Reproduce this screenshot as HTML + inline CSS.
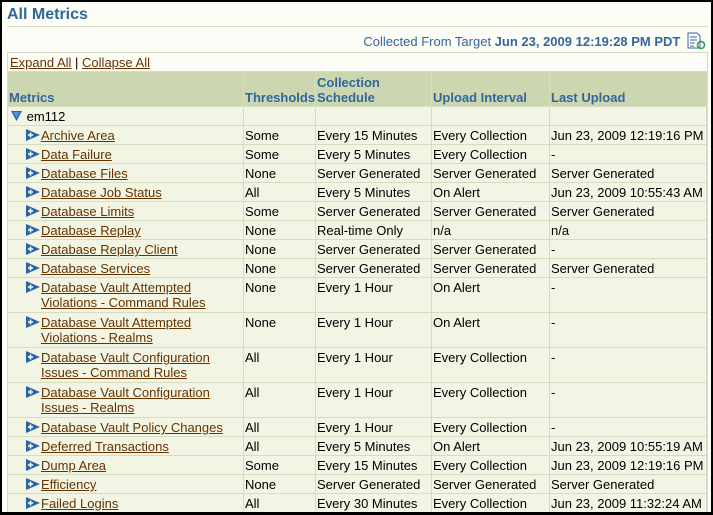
<!DOCTYPE html>
<html><head><style>
*{margin:0;padding:0;box-sizing:border-box}
html,body{width:713px;height:515px;overflow:hidden}
body{background:#000;font-family:"Liberation Sans",sans-serif;font-size:13px;color:#000}
#pg{position:absolute;left:2px;top:2px;width:709px;height:510px;background:#fcfdf7;overflow:hidden}
h1{position:absolute;left:5px;top:4px;font-size:16px;font-weight:bold;color:#336699}
.hr{position:absolute;left:5px;top:24px;width:701px;height:1px;background:#d6dcbf}
.col{position:absolute;right:5px;top:30px;font-size:13px;color:#336699;white-space:nowrap}
.col b{font-weight:bold}
.box{position:absolute;left:5px;top:50px;width:701px;height:470px;border:1px solid #d6dcbf;border-bottom:none}
.links{position:absolute;left:8px;top:53px;font-size:13px}
a{color:#663300;text-decoration:underline}
table{position:absolute;left:5px;top:69px;border-collapse:collapse;table-layout:fixed;width:699px}
td,th{border:1px solid #d6dcbf;padding:0 1px;vertical-align:top;text-align:left;white-space:nowrap;line-height:15px;overflow:hidden}
th{background:#ccd6b0;color:#336699;font-weight:bold;vertical-align:bottom;padding-bottom:1px}
td{background:#f2f4e4;height:19px;padding-top:2px}
tr.d td{height:35px}
.ic{display:inline-block;width:16px;height:12px;vertical-align:-1px}
.m{padding-left:17px}
.c2{padding-left:16px}
</style></head><body><div id="pg">
<h1>All Metrics</h1>
<div class="hr"></div>
<div class="col">Collected From Target <b>Jun 23, 2009 12:19:28 PM PDT</b> <svg width="20" height="18" style="vertical-align:-4px;margin-left:2px" viewBox="0 0 20 18"><path d="M2 1h9l3 3v12H2z" fill="#fff" stroke="#336699"/><path d="M4 5h7M4 8h7M4 11h5M4 14h4" stroke="#336699"/><circle cx="15" cy="13" r="3.5" fill="none" stroke="#2a9a4a" stroke-width="1.5"/></svg></div>
<div class="box"></div>
<div class="links"><a>Expand All</a> | <a>Collapse All</a></div>
<table>
<colgroup><col style="width:236px"><col style="width:72px"><col style="width:116px"><col style="width:118px"><col style="width:157px"></colgroup>
<tr style="height:35px"><th>Metrics</th><th>Thresholds</th><th>Collection<br>Schedule</th><th>Upload Interval</th><th>Last Upload</th></tr>
<tr><td><svg width="12" height="12" style="vertical-align:-1px;margin-left:2px" viewBox="0 0 12 12"><path d="M0 1h11L5.5 11z" fill="#2a64a8"/><path d="M2 2h7L5.5 8z" fill="#5a90d0"/></svg> em112</td><td></td><td></td><td></td><td></td></tr>
<tr><td class="m"><svg class="ic" viewBox="0 0 16 12"><path d="M1 0l14 6L1 12z" fill="#2a64a8"/><path d="M3 6h5M5.5 3.5v5" stroke="#fff" stroke-width="1.5"/></svg><a>Archive Area</a></td><td>Some</td><td>Every 15 Minutes</td><td>Every Collection</td><td>Jun 23, 2009 12:19:16 PM</td></tr>
<tr><td class="m"><svg class="ic" viewBox="0 0 16 12"><path d="M1 0l14 6L1 12z" fill="#2a64a8"/><path d="M3 6h5M5.5 3.5v5" stroke="#fff" stroke-width="1.5"/></svg><a>Data Failure</a></td><td>Some</td><td>Every 5 Minutes</td><td>Every Collection</td><td>-</td></tr>
<tr><td class="m"><svg class="ic" viewBox="0 0 16 12"><path d="M1 0l14 6L1 12z" fill="#2a64a8"/><path d="M3 6h5M5.5 3.5v5" stroke="#fff" stroke-width="1.5"/></svg><a>Database Files</a></td><td>None</td><td>Server Generated</td><td>Server Generated</td><td>Server Generated</td></tr>
<tr><td class="m"><svg class="ic" viewBox="0 0 16 12"><path d="M1 0l14 6L1 12z" fill="#2a64a8"/><path d="M3 6h5M5.5 3.5v5" stroke="#fff" stroke-width="1.5"/></svg><a>Database Job Status</a></td><td>All</td><td>Every 5 Minutes</td><td>On Alert</td><td>Jun 23, 2009 10:55:43 AM</td></tr>
<tr><td class="m"><svg class="ic" viewBox="0 0 16 12"><path d="M1 0l14 6L1 12z" fill="#2a64a8"/><path d="M3 6h5M5.5 3.5v5" stroke="#fff" stroke-width="1.5"/></svg><a>Database Limits</a></td><td>Some</td><td>Server Generated</td><td>Server Generated</td><td>Server Generated</td></tr>
<tr><td class="m"><svg class="ic" viewBox="0 0 16 12"><path d="M1 0l14 6L1 12z" fill="#2a64a8"/><path d="M3 6h5M5.5 3.5v5" stroke="#fff" stroke-width="1.5"/></svg><a>Database Replay</a></td><td>None</td><td>Real-time Only</td><td>n/a</td><td>n/a</td></tr>
<tr><td class="m"><svg class="ic" viewBox="0 0 16 12"><path d="M1 0l14 6L1 12z" fill="#2a64a8"/><path d="M3 6h5M5.5 3.5v5" stroke="#fff" stroke-width="1.5"/></svg><a>Database Replay Client</a></td><td>None</td><td>Server Generated</td><td>Server Generated</td><td>-</td></tr>
<tr><td class="m"><svg class="ic" viewBox="0 0 16 12"><path d="M1 0l14 6L1 12z" fill="#2a64a8"/><path d="M3 6h5M5.5 3.5v5" stroke="#fff" stroke-width="1.5"/></svg><a>Database Services</a></td><td>None</td><td>Server Generated</td><td>Server Generated</td><td>Server Generated</td></tr>
<tr class="d"><td class="m"><svg class="ic" viewBox="0 0 16 12"><path d="M1 0l14 6L1 12z" fill="#2a64a8"/><path d="M3 6h5M5.5 3.5v5" stroke="#fff" stroke-width="1.5"/></svg><a>Database Vault Attempted</a><br><span class="c2"><a>Violations - Command Rules</a></span></td><td>None</td><td>Every 1 Hour</td><td>On Alert</td><td>-</td></tr>
<tr class="d"><td class="m"><svg class="ic" viewBox="0 0 16 12"><path d="M1 0l14 6L1 12z" fill="#2a64a8"/><path d="M3 6h5M5.5 3.5v5" stroke="#fff" stroke-width="1.5"/></svg><a>Database Vault Attempted</a><br><span class="c2"><a>Violations - Realms</a></span></td><td>None</td><td>Every 1 Hour</td><td>On Alert</td><td>-</td></tr>
<tr class="d"><td class="m"><svg class="ic" viewBox="0 0 16 12"><path d="M1 0l14 6L1 12z" fill="#2a64a8"/><path d="M3 6h5M5.5 3.5v5" stroke="#fff" stroke-width="1.5"/></svg><a>Database Vault Configuration</a><br><span class="c2"><a>Issues - Command Rules</a></span></td><td>All</td><td>Every 1 Hour</td><td>Every Collection</td><td>-</td></tr>
<tr class="d"><td class="m"><svg class="ic" viewBox="0 0 16 12"><path d="M1 0l14 6L1 12z" fill="#2a64a8"/><path d="M3 6h5M5.5 3.5v5" stroke="#fff" stroke-width="1.5"/></svg><a>Database Vault Configuration</a><br><span class="c2"><a>Issues - Realms</a></span></td><td>All</td><td>Every 1 Hour</td><td>Every Collection</td><td>-</td></tr>
<tr><td class="m"><svg class="ic" viewBox="0 0 16 12"><path d="M1 0l14 6L1 12z" fill="#2a64a8"/><path d="M3 6h5M5.5 3.5v5" stroke="#fff" stroke-width="1.5"/></svg><a>Database Vault Policy Changes</a></td><td>All</td><td>Every 1 Hour</td><td>Every Collection</td><td>-</td></tr>
<tr><td class="m"><svg class="ic" viewBox="0 0 16 12"><path d="M1 0l14 6L1 12z" fill="#2a64a8"/><path d="M3 6h5M5.5 3.5v5" stroke="#fff" stroke-width="1.5"/></svg><a>Deferred Transactions</a></td><td>All</td><td>Every 5 Minutes</td><td>On Alert</td><td>Jun 23, 2009 10:55:19 AM</td></tr>
<tr><td class="m"><svg class="ic" viewBox="0 0 16 12"><path d="M1 0l14 6L1 12z" fill="#2a64a8"/><path d="M3 6h5M5.5 3.5v5" stroke="#fff" stroke-width="1.5"/></svg><a>Dump Area</a></td><td>Some</td><td>Every 15 Minutes</td><td>Every Collection</td><td>Jun 23, 2009 12:19:16 PM</td></tr>
<tr><td class="m"><svg class="ic" viewBox="0 0 16 12"><path d="M1 0l14 6L1 12z" fill="#2a64a8"/><path d="M3 6h5M5.5 3.5v5" stroke="#fff" stroke-width="1.5"/></svg><a>Efficiency</a></td><td>None</td><td>Server Generated</td><td>Server Generated</td><td>Server Generated</td></tr>
<tr><td class="m"><svg class="ic" viewBox="0 0 16 12"><path d="M1 0l14 6L1 12z" fill="#2a64a8"/><path d="M3 6h5M5.5 3.5v5" stroke="#fff" stroke-width="1.5"/></svg><a>Failed Logins</a></td><td>All</td><td>Every 30 Minutes</td><td>Every Collection</td><td>Jun 23, 2009 11:32:24 AM</td></tr>
</table>
</div></body></html>
